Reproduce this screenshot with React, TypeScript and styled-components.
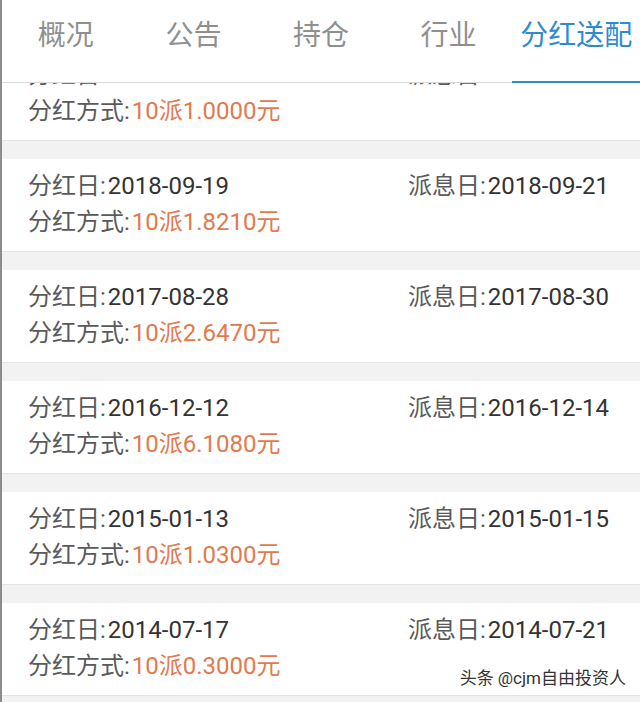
import React from "react";
import styled, { createGlobalStyle } from "styled-components";

const GlobalStyle = createGlobalStyle`
  html, body {
    margin: 0;
    padding: 0;
    background: #f2f2f2;
    overflow: hidden;
  }
`;

const tabs = ["概况", "公告", "持仓", "行业", "分红送配"];

const records = [
  { pay: "2019-07-10", divi: "2019-07-12", plan: "10派1.0000元" },
  { pay: "2018-09-19", divi: "2018-09-21", plan: "10派1.8210元" },
  { pay: "2017-08-28", divi: "2017-08-30", plan: "10派2.6470元" },
  { pay: "2016-12-12", divi: "2016-12-14", plan: "10派6.1080元" },
  { pay: "2015-01-13", divi: "2015-01-15", plan: "10派1.0300元" },
  { pay: "2014-07-17", divi: "2014-07-21", plan: "10派0.3000元" },
];

const App = () => {
  return (
    <Page>
      <GlobalStyle />
      <TabBar>
        {tabs.map((t, i) => (
          <Tab key={t} $active={i === tabs.length - 1}>
            {t}
          </Tab>
        ))}
      </TabBar>
      <List>
        {records.map((r, i) => (
          <Card key={r.pay} $first={i === 0}>
            <Cell>
              <Label>分红日:</Label>
              <Value>{r.pay}</Value>
            </Cell>
            <Cell>
              <Label>派息日:</Label>
              <Value>{r.divi}</Value>
            </Cell>
            <Cell>
              <Label>分红方式:</Label>
              <Plan>{r.plan}</Plan>
            </Cell>
          </Card>
        ))}
      </List>
      <Watermark>头条 @cjm自由投资人</Watermark>
    </Page>
  );
};

export default App;

const Page = styled.div`
  position: relative;
  height: 702px;
  display: flex;
  flex-direction: column;
  border-left: 2px solid #8c8c8c;
  background: #f2f2f2;
  font-family: Roboto, "Noto Sans CJK SC", sans-serif;
  overflow: hidden;
`;

const TabBar = styled.div`
  position: relative;
  z-index: 1;
  display: flex;
  height: 82px;
  background: #fff;
  border-bottom: 1px solid #dcdcdc;
  flex-shrink: 0;
`;

const Tab = styled.div<{ $active: boolean }>`
  flex: 1;
  display: flex;
  justify-content: center;
  align-items: flex-start;
  padding-top: 19px;
  box-sizing: border-box;
  font-size: 28px;
  line-height: 34px;
  color: ${(p) => (p.$active ? "#2e8bd0" : "#8f8f8f")};
  border-bottom: 2px solid ${(p) => (p.$active ? "#2e8bd0" : "transparent")};
  margin-bottom: -1px;
`;

const List = styled.div`
  flex: 1;
  display: flex;
  flex-direction: column;
  gap: 18px;
  overflow: hidden;
`;

const Card = styled.div<{ $first: boolean }>`
  display: grid;
  grid-template-columns: 380px auto;
  padding: 9px 26px 11px;
  margin-top: ${(p) => (p.$first ? "-35px" : "0")};
  background: #fff;
  border-bottom: 1px solid #e4e4e4;
  flex-shrink: 0;
`;

const Cell = styled.div`
  font-size: 24px;
  line-height: 36px;
  white-space: nowrap;
`;

const Label = styled.span`
  color: #5a5a5a;
  margin-right: 2px;
`;

const Value = styled.span`
  color: #333;
`;

const Plan = styled.span`
  color: #e27a4e;
`;

const Watermark = styled.div`
  position: absolute;
  right: 14px;
  bottom: 13px;
  font-size: 17px;
  color: #333;
  text-shadow: 0 0 2px #fff;
`;
